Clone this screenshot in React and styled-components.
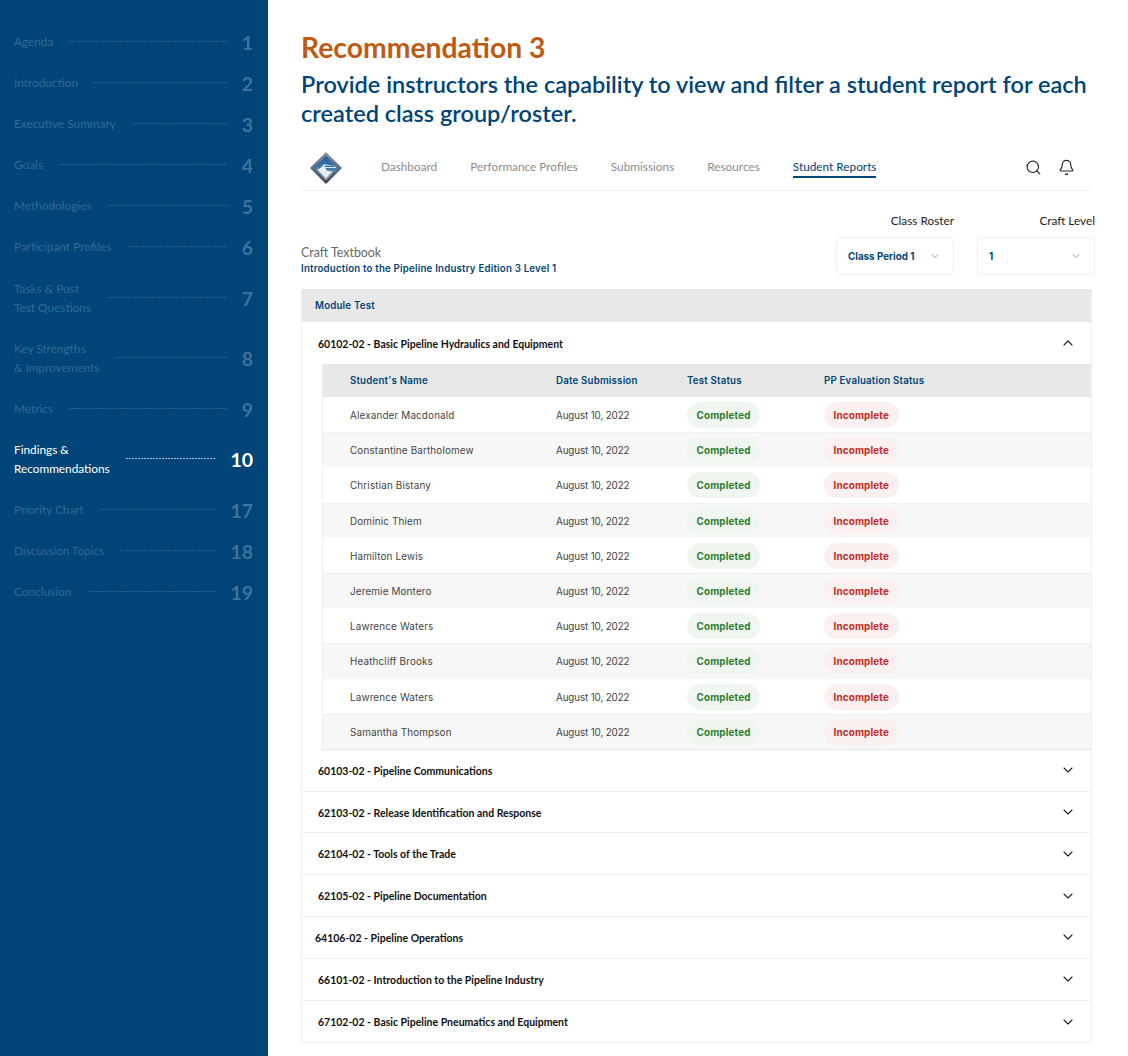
import React from "react";
import styled, { createGlobalStyle } from "styled-components";
import { ChevronDown, ChevronUp, Search, Bell } from "lucide-react";

const GlobalStyle = createGlobalStyle`
  html, body {
    margin: 0;
    padding: 0;
    background: #ffffff;
  }
  * {
    box-sizing: border-box;
  }
`;

const agenda = [
  { label: ["Agenda"], page: 1 },
  { label: ["Introduction"], page: 2 },
  { label: ["Executive Summary"], page: 3 },
  { label: ["Goals"], page: 4 },
  { label: ["Methodologies"], page: 5 },
  { label: ["Participant Profiles"], page: 6 },
  { label: ["Tasks & Post", "Test Questions"], page: 7 },
  { label: ["Key Strengths", "& Improvements"], page: 8 },
  { label: ["Metrics"], page: 9 },
  { label: ["Findings &", "Recommendations"], page: 10, active: true },
  { label: ["Priority Chart"], page: 17 },
  { label: ["Discussion Topics"], page: 18 },
  { label: ["Conclusion"], page: 19 },
];

const navLinks = ["Dashboard", "Performance Profiles", "Submissions", "Resources", "Student Reports"];

const students = [
  "Alexander Macdonald",
  "Constantine Bartholomew",
  "Christian Bistany",
  "Dominic Thiem",
  "Hamilton Lewis",
  "Jeremie Montero",
  "Lawrence Waters",
  "Heathcliff Brooks",
  "Lawrence Waters",
  "Samantha Thompson",
];

const modules = [
  { title: "60103-02 - Pipeline Communications" },
  { title: "62103-02 - Release Identification and Response" },
  { title: "62104-02 - Tools of the Trade" },
  { title: "62105-02 - Pipeline Documentation" },
  { title: "64106-02 - Pipeline Operations", shifted: true },
  { title: "66101-02 - Introduction to the Pipeline Industry" },
  { title: "67102-02 - Basic Pipeline Pneumatics and Equipment" },
];

const Logo = () => (
  <svg width="32" height="32" viewBox="0 0 34 34">
    <defs>
      <linearGradient id="logoEdge" x1="0" y1="0" x2="0" y2="1">
        <stop offset="0" stopColor="#8d97a3" />
        <stop offset="0.55" stopColor="#5f6873" />
        <stop offset="1" stopColor="#3f454c" />
      </linearGradient>
      <linearGradient id="logoFace" x1="0" y1="0" x2="0" y2="1">
        <stop offset="0" stopColor="#1f5f98" />
        <stop offset="0.5" stopColor="#3f78ab" />
        <stop offset="1" stopColor="#a9b4c0" />
      </linearGradient>
    </defs>
    <polygon points="17,0 34,17 17,34 0,17" fill="url(#logoEdge)" />
    <polygon points="17,4 30,17 17,30 4,17" fill="url(#logoFace)" />
    <path d="M7.5 18.5 C11 18 13 15.5 14.5 13 L26 14.5 L28 17 L17 17 C15.5 19 19 21 24 20.5 L17 27.5 Z" fill="#e9edf1" />
    <path d="M15.5 14.5 H26 V16 H15.5 Z" fill="#2d6aa0" />
  </svg>
);

export default function App() {
  return (
    <Page>
      <GlobalStyle />
      <Sidebar>
        {agenda.map((item) => (
          <AgendaRow key={item.page} $active={item.active}>
            <AgendaLabel>
              {item.label.map((line) => (
                <div key={line}>{line}</div>
              ))}
            </AgendaLabel>
            <AgendaDots $active={item.active} />
            <AgendaPage $active={item.active}>{item.page}</AgendaPage>
          </AgendaRow>
        ))}
      </Sidebar>
      <Main>
        <Title>Recommendation 3</Title>
        <Subtitle>Provide instructors the capability to view and filter a student report for each created class group/roster.</Subtitle>

        <TopNav>
          <LogoSlot>
            <Logo />
          </LogoSlot>
          <NavLinks>
            {navLinks.map((link) => (
              <NavLink key={link} $active={link === "Student Reports"}>
                {link}
              </NavLink>
            ))}
          </NavLinks>
          <NavIcons>
            <Search size={17} strokeWidth={1.6} />
            <Bell size={17} strokeWidth={1.6} />
          </NavIcons>
        </TopNav>

        <FilterBar>
          <Textbook>
            <TextbookLabel>Craft Textbook</TextbookLabel>
            <TextbookName>Introduction to the Pipeline Industry Edition 3 Level 1</TextbookName>
          </Textbook>
          <Filters>
            <Filter>
              <FilterLabel>Class Roster</FilterLabel>
              <Select>
                Class Period 1
                <ChevronDown size={12} strokeWidth={1.4} color="#777777" />
              </Select>
            </Filter>
            <Filter>
              <FilterLabel>Craft Level</FilterLabel>
              <Select>
                1
                <ChevronDown size={12} strokeWidth={1.4} color="#777777" />
              </Select>
            </Filter>
          </Filters>
        </FilterBar>

        <Card>
          <CardHead>Module Test</CardHead>
          <ModuleRow $height={42}>
            <ModuleTitle>60102-02 - Basic Pipeline Hydraulics and Equipment</ModuleTitle>
            <ChevronUp size={16} strokeWidth={1.6} color="#222222" />
          </ModuleRow>
          <Table>
            <TableHead>
              <span>Student's Name</span>
              <span>Date Submission</span>
              <span>Test Status</span>
              <span>PP Evaluation Status</span>
            </TableHead>
            {students.map((name, i) => (
              <TableRow key={name + i} $striped={i % 2 === 1}>
                <span>{name}</span>
                <DateCell>August 10, 2022</DateCell>
                <Pill $tone="green">Completed</Pill>
                <Pill $tone="red">Incomplete</Pill>
              </TableRow>
            ))}
          </Table>
          {modules.map((m) => (
            <ModuleRow key={m.title} $height={41.8} $bordered>
              <ModuleTitle $shifted={m.shifted}>{m.title}</ModuleTitle>
              <ChevronDown size={16} strokeWidth={1.6} color="#222222" />
            </ModuleRow>
          ))}
        </Card>
      </Main>
    </Page>
  );
}

const Page = styled.div`
  width: 1128px;
  height: 1056px;
  display: flex;
  overflow: hidden;
  font-family: Lato, sans-serif;
`;
const Sidebar = styled.aside`
  width: 268px;
  flex-shrink: 0;
  display: flex;
  flex-direction: column;
  gap: 22.1px;
  padding: 33px 15px 0 14px;
  background-color: #004478;
`;
const AgendaRow = styled.div`
  display: flex;
  align-items: center;
  color: ${(p) => (p.$active ? "#ffffff" : "#346a95")};
  font-size: 11.8px;
  line-height: 19px;
`;
const AgendaLabel = styled.div`
  flex-shrink: 0;
  margin: -1px 0 1px;
`;
const AgendaDots = styled.div`
  flex: 1;
  margin: 0 15px 2px 16px;
  height: 1px;
  background-image: repeating-linear-gradient(
    to right,
    ${(p) => (p.$active ? "#a9bfd3" : "#2a628e")} 0 2px,
    transparent 2px 3px
  );
`;
const AgendaPage = styled.div`
  font-size: 19.5px;
  font-weight: 700;
  color: ${(p) => (p.$active ? "#ffffff" : "#3f729b")};
`;
const Main = styled.main`
  flex: 1;
  min-width: 0;
  padding: 30px 36px 0 33px;
`;
const Title = styled.h1`
  margin: 0;
  font-size: 28.3px;
  line-height: 34px;
  font-weight: 700;
  color: #c05a12;
`;
const Subtitle = styled.h2`
  margin: 6px 0 0;
  font-size: 23.5px;
  line-height: 29px;
  font-weight: 600;
  color: #004478;
`;
const TopNav = styled.nav`
  display: flex;
  align-items: center;
  height: 46px;
  margin-top: 17px;
  border-bottom: 1px solid #f0f0f0;
`;
const LogoSlot = styled.div`
  display: flex;
  width: 80px;
  padding-left: 9px;
`;
const NavLinks = styled.div`
  display: flex;
  gap: 33px;
  flex: 1;
`;
const NavLink = styled.span`
  font-size: 11.8px;
  line-height: 18px;
  color: ${(p) => (p.$active ? "#004478" : "#8c8c8c")};
  border-bottom: 2px solid ${(p) => (p.$active ? "#004478" : "transparent")};
`;
const NavIcons = styled.div`
  display: flex;
  gap: 16px;
  padding-right: 17px;
  color: #222222;
`;
const FilterBar = styled.div`
  display: flex;
  justify-content: space-between;
  align-items: flex-end;
  margin: 22px -3px 14px 0;
`;
const Textbook = styled.div`
  display: flex;
  flex-direction: column;
  gap: 2px;
`;
const TextbookLabel = styled.div`
  font-size: 12.4px;
  line-height: 17px;
  color: #666666;
`;
const TextbookName = styled.div`
  font-family: Inter, sans-serif;
  font-size: 9.7px;
  line-height: 12px;
  font-weight: 600;
  color: #004478;
  letter-spacing: 0.2px;
`;
const Filters = styled.div`
  display: flex;
  gap: 23px;
`;
const Filter = styled.div`
  display: flex;
  flex-direction: column;
  align-items: flex-end;
  gap: 8px;
`;
const FilterLabel = styled.div`
  font-size: 11.8px;
  line-height: 16px;
  color: #222222;
`;
const Select = styled.div`
  width: 118px;
  height: 38px;
  display: flex;
  align-items: center;
  justify-content: space-between;
  padding: 0 12px 0 11px;
  border: 1px solid #f0f0f0;
  border-radius: 4px;
  font-family: Inter, sans-serif;
  font-size: 9.8px;
  font-weight: 700;
  color: #004478;
`;
const Card = styled.section`
  border: 1px solid #eeeeee;
  border-top: none;
`;
const CardHead = styled.div`
  height: 33px;
  display: flex;
  align-items: center;
  padding-left: 13px;
  background-color: #e8e8e8;
  font-family: Inter, sans-serif;
  font-size: 9.7px;
  font-weight: 600;
  color: #004478;
  letter-spacing: 0.2px;
`;
const ModuleRow = styled.div`
  height: ${(p) => p.$height}px;
  display: flex;
  align-items: center;
  justify-content: space-between;
  padding: 0 15px 0 16px;
  border-bottom: ${(p) => (p.$bordered ? "1px solid #efefef" : "none")};
  &:last-child {
    border-bottom: none;
  }
`;
const ModuleTitle = styled.div`
  font-size: 10.5px;
  font-weight: 700;
  color: #111111;
  padding-top: 1px;
  margin-left: ${(p) => (p.$shifted ? "-3px" : "0")};
`;
const Table = styled.div`
  margin-left: 20px;
  border-left: 1px solid #eeeeee;
  border-bottom: 1px solid #e4e4e4;
`;
const TableHead = styled.div`
  height: 33px;
  display: grid;
  grid-template-columns: 206px 131px 137px 1fr;
  align-items: center;
  padding-left: 27px;
  background-color: #e8e8e8;
  font-family: Inter, sans-serif;
  font-size: 9.7px;
  font-weight: 600;
  color: #004478;
  letter-spacing: 0.2px;
`;
const TableRow = styled.div`
  height: 35.2px;
  display: grid;
  grid-template-columns: 206px 131px 137px 1fr;
  align-items: center;
  padding-left: 27px;
  background-color: ${(p) => (p.$striped ? "#f7f7f7" : "#ffffff")};
  border-top: 1px solid ${(p) => (p.$striped ? "#f0f0f0" : "transparent")};
  font-family: Inter, sans-serif;
  font-size: 9.9px;
  color: #444444;
  letter-spacing: 0.15px;
`;
const DateCell = styled.span`
  letter-spacing: -0.15px;
`;
const Pill = styled.span`
  justify-self: start;
  height: 26px;
  display: flex;
  align-items: center;
  padding: 0 9.5px;
  border-radius: 13px;
  font-size: 9.9px;
  font-weight: 700;
  color: ${(p) => (p.$tone === "green" ? "#2e7d32" : "#c62828")};
  background-color: ${(p) => (p.$tone === "green" ? "#eff6ef" : "#f9f0ef")};
`;
